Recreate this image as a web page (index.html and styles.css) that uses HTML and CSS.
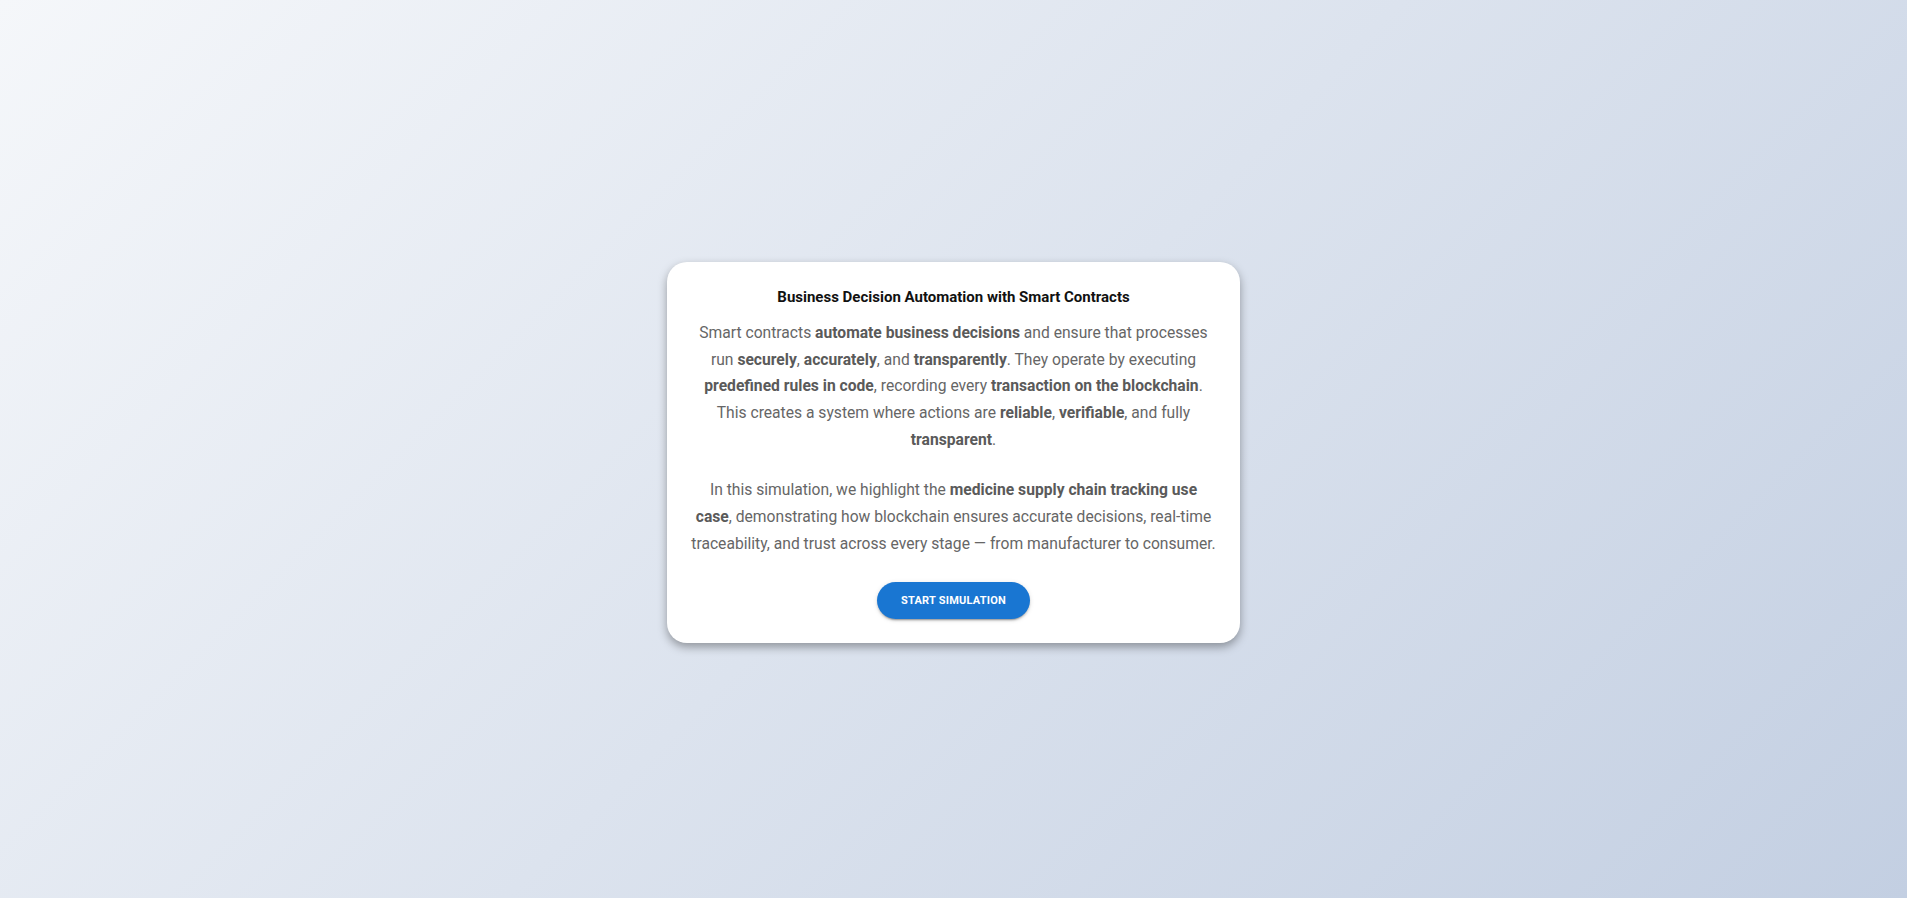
FILE: index.html
```html
<!DOCTYPE html>
<html lang="en">
<head>
<meta charset="utf-8">
<title>Business Decision Automation with Smart Contracts</title>
<link rel="stylesheet" href="styles.css">
</head>
<body>
<main class="page">
  <section class="card">
    <h1 class="title">Business Decision Automation with Smart Contracts</h1>
    <p class="text">Smart contracts <b>automate business decisions</b> and ensure that processes run <b>securely</b>, <b>accurately</b>, and <b>transparently</b>. They operate by executing <b>predefined rules in code</b>, recording every <b>transaction on the blockchain</b>. This creates a system where actions are <b>reliable</b>, <b>verifiable</b>, and fully <b>transparent</b>.</p>
    <p class="text">In this simulation, we highlight the <b>medicine supply chain tracking use case</b>, demonstrating how blockchain ensures accurate decisions, real-time traceability, and trust across every stage — from manufacturer to consumer.</p>
    <button class="btn" type="button">Start Simulation</button>
  </section>
</main>
</body>
</html>
```
FILE: styles.css
```css
* { box-sizing: border-box; }
html, body { margin: 0; height: 100%; }
body {
  font-family: Roboto, "Liberation Sans", Arial, sans-serif;
  background: linear-gradient(135deg, #f5f7fa 0%, #c3cfe2 100%);
}
.page {
  min-height: 100vh;
  padding-top: 7px;
  display: flex;
  align-items: center;
  justify-content: center;
}
.card {
  width: 573px;
  background: #fff;
  border-radius: 20px;
  padding: 24px;
  text-align: center;
  box-shadow: 0 4px 10px rgba(0,0,0,0.35);
}
.title {
  margin: 0 0 11px;
  font-size: 15px;
  font-weight: 700;
  color: #111;
  line-height: 1.5;
}
.text {
  margin: 0 0 24px;
  font-size: 15.65px;
  line-height: 26.7px;
  color: #666;
}
.text b { font-weight: 700; color: #5a5a5a; }
.btn {
  height: 37px;
  padding: 0 24px;
  border: none;
  border-radius: 20px;
  background: #1976d2;
  color: #fff;
  font-family: Roboto, "Liberation Sans", Arial, sans-serif;
  font-size: 11px;
  font-weight: 700;
  text-transform: uppercase;
  letter-spacing: 0.02em;
  box-shadow: 0 3px 1px -2px rgba(0,0,0,0.2), 0 2px 2px rgba(0,0,0,0.14), 0 1px 5px rgba(0,0,0,0.12);
}
```
